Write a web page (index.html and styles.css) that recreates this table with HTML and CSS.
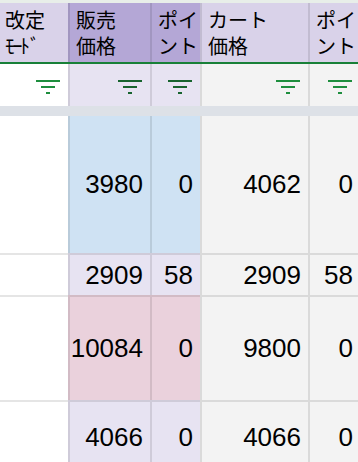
FILE: index.html
```html
<!DOCTYPE html>
<html lang="ja">
<head>
<meta charset="utf-8">
<link rel="stylesheet" href="styles.css">
</head>
<body>
<div class="sheet">
  <div class="band-top"></div>

  <div class="cell head c1"><span class="ln">改定</span><span class="ln narrow">ﾓｰﾄﾞ</span></div>
  <div class="cell head sel"><span class="ln">販売</span><span class="ln">価格</span></div>
  <div class="cell head sel"><span class="ln">ポイ</span><span class="ln">ント</span></div>
  <div class="cell head lav"><span class="ln">カート</span><span class="ln">価格</span></div>
  <div class="cell head lav"><span class="ln">ポイ</span><span class="ln">ント</span></div>

  <div class="green-line"></div>

  <div class="cell filter c1"><svg class="ficon" viewBox="0 0 24 14"><rect x="0" y="0" width="24" height="2"/><rect x="5" y="6" width="14" height="2"/><rect x="10" y="12" width="4" height="2"/></svg></div>
  <div class="cell filter pale dark"><svg class="ficon" viewBox="0 0 24 14"><rect x="0" y="0" width="24" height="2"/><rect x="5" y="6" width="14" height="2"/><rect x="10" y="12" width="4" height="2"/></svg></div>
  <div class="cell filter pale dark"><svg class="ficon" viewBox="0 0 24 14"><rect x="0" y="0" width="24" height="2"/><rect x="5" y="6" width="14" height="2"/><rect x="10" y="12" width="4" height="2"/></svg></div>
  <div class="cell filter gray"><svg class="ficon" viewBox="0 0 24 14"><rect x="0" y="0" width="24" height="2"/><rect x="5" y="6" width="14" height="2"/><rect x="10" y="12" width="4" height="2"/></svg></div>
  <div class="cell filter gray"><svg class="ficon" viewBox="0 0 24 14"><rect x="0" y="0" width="24" height="2"/><rect x="5" y="6" width="14" height="2"/><rect x="10" y="12" width="4" height="2"/></svg></div>

  <div class="freeze"></div>

  <div class="cell num c1 first"></div>
  <div class="cell num blue first">3980</div>
  <div class="cell num blue first">0</div>
  <div class="cell num gray first">4062</div>
  <div class="cell num gray first">0</div>

  <div class="cell num c1"></div>
  <div class="cell num pale">2909</div>
  <div class="cell num pale">58</div>
  <div class="cell num gray">2909</div>
  <div class="cell num gray">58</div>

  <div class="cell num c1"></div>
  <div class="cell num pink">10084</div>
  <div class="cell num pink">0</div>
  <div class="cell num gray">9800</div>
  <div class="cell num gray">0</div>

  <div class="cell num c1"></div>
  <div class="cell num pale">4066</div>
  <div class="cell num pale">0</div>
  <div class="cell num gray">4066</div>
  <div class="cell num gray">0</div>
</div>
</body>
</html>
```

FILE: styles.css
```css
html, body {
  margin: 0;
  padding: 0;
  background: #ffffff;
  overflow: hidden;
}

.sheet {
  display: grid;
  grid-template-columns: 68px 82px 50px 108px 52px;
  grid-template-rows: 3px 59px 2px 42px 10px 137px 42px 105px 73px;
  width: 360px;
}

.band-top {
  grid-column: 1 / -1;
  background: #e8eee9;
}

.green-line {
  grid-column: 1 / -1;
  background: #188038;
}

.freeze {
  grid-column: 1 / -1;
  background: #dde1e7;
}

.cell {
  box-sizing: border-box;
  border-left: 2px solid rgba(0, 0, 0, 0.1);
  border-top: 2px solid rgba(0, 0, 0, 0.1);
  background: #ffffff;
}

.cell.c1 {
  border-left: none;
}

.head,
.filter,
.first {
  border-top: none;
}

.head {
  display: flex;
  flex-direction: column;
  justify-content: center;
  padding-left: 6px;
  font-family: "Noto Sans CJK JP", sans-serif;
  font-size: 20px;
  color: #000000;
  white-space: nowrap;
  overflow: hidden;
  background: #d9d2e9;
}

.ln {
  display: block;
  height: 26px;
  line-height: 26px;
}

.head.c1 {
  padding-left: 5px;
}

.head.sel {
  background: #b4a7d6;
}

.narrow {
  letter-spacing: -2.5px;
}

.filter {
  display: flex;
  justify-content: flex-end;
  align-items: flex-start;
  padding: 16px 8px 0 0;
}

.ficon {
  width: 24px;
  height: 14px;
  fill: #1e8e3e;
}

.dark .ficon {
  fill: #17632e;
}

.num {
  display: flex;
  align-items: center;
  justify-content: flex-end;
  padding-right: 7px;
  font-family: "Liberation Sans", Arial, sans-serif;
  font-size: 26px;
  color: #000000;
}

.pale {
  background: #e7e3f2;
}

.gray {
  background: #f3f3f3;
}

.blue {
  background: #cfe2f3;
}

.pink {
  background: #ead1dc;
}
```
